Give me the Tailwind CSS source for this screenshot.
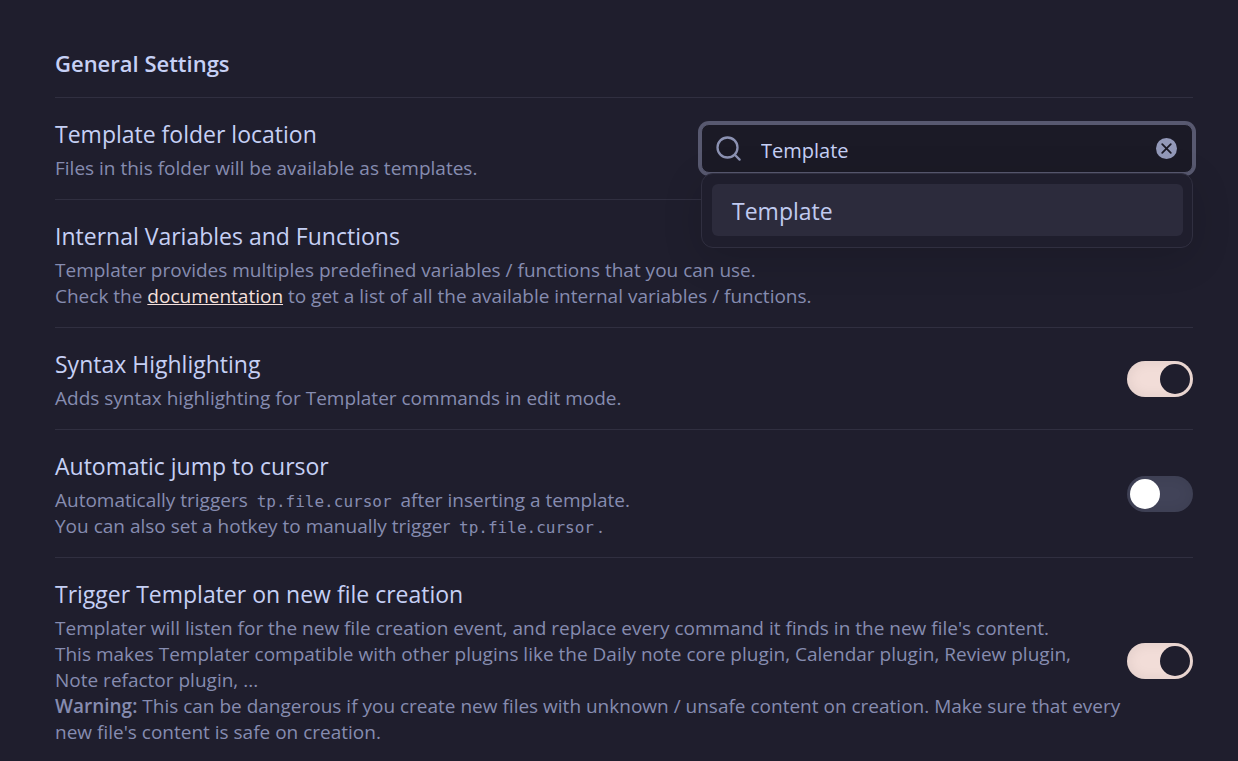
<!DOCTYPE html>
<html lang="en">
<head>
<meta charset="utf-8">
<meta name="viewport" content="width=device-width, initial-scale=1">
<title>General Settings</title>
<script src="https://cdn.jsdelivr.net/npm/@tailwindcss/browser@4"></script>
</head>
<body class="bg-[#1f1e2d] font-['Open_Sans',sans-serif] text-[19px] leading-[26px] text-[#868cb0]">
<main class="pt-[47px] pr-[45px] pl-[55px]">
  <h1 class="border-b border-[#302f40] pb-[18px] text-[22px] leading-8 font-semibold text-[#c6d0f5]">General Settings</h1>

  <section class="flex items-center justify-between border-b border-[#302f40] py-5">
    <div class="min-w-0 flex-1">
      <h2 class="mb-[5px] text-[23px] leading-8 text-[#c6d0f5]"><label for="folder">Template folder location</label></h2>
      <p class="-mb-0.5">Files in this folder will be available as templates.</p>
    </div>
    <div class="relative h-[49px] w-[492px] shrink-0">
      <input id="folder" type="text" value="Template" class="h-[49px] w-full rounded-lg border border-[#585970] bg-[#1b1a26] pt-1 pr-14 pl-[59px] text-xl text-[#c6d0f5] ring-3 ring-[#585970] outline-none">
      <svg class="pointer-events-none absolute top-3 left-[15px] size-[26px] text-[#8c92b3]" viewBox="0 0 26 26" fill="none" stroke="currentColor" stroke-width="2.3" stroke-linecap="round" aria-hidden="true"><circle cx="11.5" cy="11.5" r="10"/><path d="M18.8 18.8l4.8 4.8"/></svg>
      <button type="button" aria-label="Clear search" class="absolute top-[14px] right-4 size-[21px] rounded-full bg-[#9399b9] text-[#1b1a26]">
        <svg class="size-[21px]" viewBox="0 0 21 21" fill="none" stroke="currentColor" stroke-width="1.8" stroke-linecap="round" aria-hidden="true"><path d="M6.2 6.2l8.6 8.6M14.8 6.2l-8.6 8.6"/></svg>
      </button>
      <div role="listbox" aria-label="Folders" class="absolute inset-x-0 top-[49px] z-10 rounded-xl border border-[#302f40] bg-[#1f1e2d] pt-2.5 pr-[9px] pb-[11px] pl-2.5 shadow-[0_10px_40px_rgba(0,0,0,0.14)]">
        <div role="option" aria-selected="true" class="rounded-md bg-[#2c2b3c] px-5 pt-[11px] pb-[9px] text-[23px] leading-8 text-[#c0caf0]">Template</div>
      </div>
    </div>
  </section>

  <section class="border-b border-[#302f40] py-5">
    <h2 class="mb-[5px] text-[23px] leading-8 text-[#c6d0f5]">Internal Variables and Functions</h2>
    <p class="-mb-0.5">Templater provides multiples predefined variables / functions that you can use.<br>Check the <a href="#documentation" class="font-medium text-[#f5e0dc] underline">documentation</a> to get a list of all the available internal variables / functions.</p>
  </section>

  <section class="flex items-center justify-between border-b border-[#302f40] py-5">
    <div class="min-w-0 flex-1">
      <h2 class="mb-[5px] text-[23px] leading-8 text-[#c6d0f5]"><label for="syntax">Syntax Highlighting</label></h2>
      <p class="-mb-0.5">Adds syntax highlighting for Templater commands in edit mode.</p>
    </div>
    <input id="syntax" type="checkbox" checked class="flex h-9 w-[66px] shrink-0 appearance-none items-center rounded-full bg-[#414358] px-[3px] shadow-[inset_0_0_14px_rgba(0,0,0,0.08)] before:size-[30px] before:rounded-full before:bg-white checked:bg-[#f2ddd8] checked:before:ml-[30px] checked:before:bg-[#1f1e2d]">
  </section>

  <section class="flex items-center justify-between border-b border-[#302f40] py-5">
    <div class="min-w-0 flex-1">
      <h2 class="mb-[5px] text-[23px] leading-8 text-[#c6d0f5]"><label for="jump">Automatic jump to cursor</label></h2>
      <p class="-mb-0.5">Automatically triggers <code class="px-1 font-['DejaVu_Sans_Mono',monospace] text-base leading-none">tp.file.cursor</code> after inserting a template.<br>You can also set a hotkey to manually trigger <code class="px-1 font-['DejaVu_Sans_Mono',monospace] text-base leading-none">tp.file.cursor</code>.</p>
    </div>
    <input id="jump" type="checkbox" class="flex h-9 w-[66px] shrink-0 appearance-none items-center rounded-full bg-[#414358] px-[3px] shadow-[inset_0_0_14px_rgba(0,0,0,0.08)] before:size-[30px] before:rounded-full before:bg-white checked:bg-[#f2ddd8] checked:before:ml-[30px] checked:before:bg-[#1f1e2d]">
  </section>

  <section class="flex items-center justify-between py-5">
    <div class="min-w-0 flex-1">
      <h2 class="mb-[5px] text-[23px] leading-8 text-[#c6d0f5]"><label for="trigger">Trigger Templater on new file creation</label></h2>
      <p class="-mb-0.5">Templater will listen for the new file creation event, and replace every command it finds in the new file's content.<br>This makes Templater compatible with other plugins like the Daily note core plugin, Calendar plugin, Review plugin,<br>Note refactor plugin, ...<br><strong class="font-semibold">Warning:</strong> This can be dangerous if you create new files with unknown / unsafe content on creation. Make sure that every<br>new file's content is safe on creation.</p>
    </div>
    <input id="trigger" type="checkbox" checked class="flex h-9 w-[66px] shrink-0 appearance-none items-center rounded-full bg-[#414358] px-[3px] shadow-[inset_0_0_14px_rgba(0,0,0,0.08)] before:size-[30px] before:rounded-full before:bg-white checked:bg-[#f2ddd8] checked:before:ml-[30px] checked:before:bg-[#1f1e2d]">
  </section>
</main>
</body>
</html>
